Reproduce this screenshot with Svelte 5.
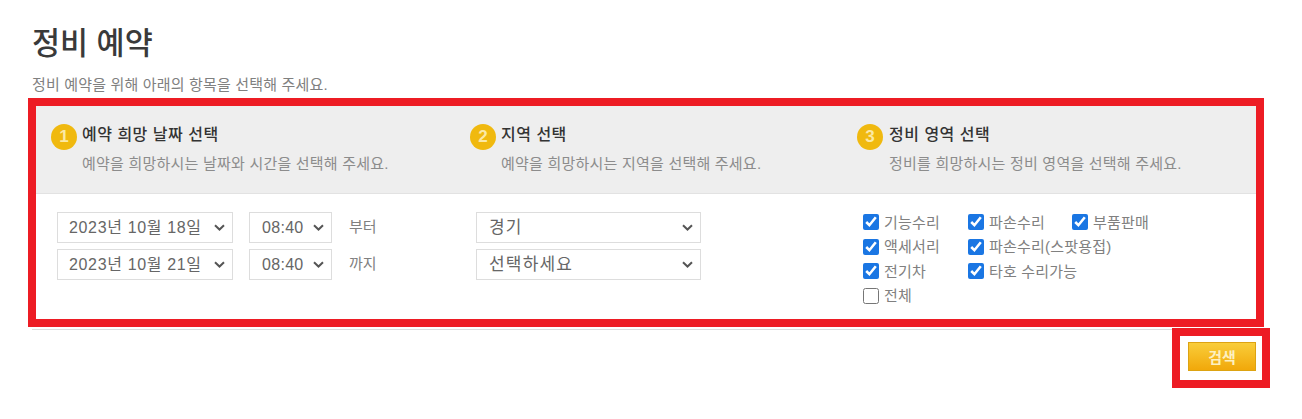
<script lang="ts">
	const steps = [
		{ no: 1, title: "예약 희망 날짜 선택", desc: "예약을 희망하시는 날짜와 시간을 선택해 주세요." },
		{ no: 2, title: "지역 선택", desc: "예약을 희망하시는 지역을 선택해 주세요." },
		{ no: 3, title: "정비 영역 선택", desc: "정비를 희망하시는 정비 영역을 선택해 주세요." }
	];

	const dates = [
		{ date: "2023년 10월 18일", time: "08:40", suffix: "부터" },
		{ date: "2023년 10월 21일", time: "08:40", suffix: "까지" }
	];

	const regions = ["경기", "선택하세요"];

	const areas = [
		{ label: "기능수리", checked: true },
		{ label: "파손수리", checked: true },
		{ label: "부품판매", checked: true },
		{ label: "액세서리", checked: true },
		{ label: "파손수리(스팟용접)", checked: true, wide: true },
		{ label: "전기차", checked: true },
		{ label: "타호 수리가능", checked: true, wide: true },
		{ label: "전체", checked: false, last: true }
	];
</script>

<main class="page">
	<h1>정비 예약</h1>
	<p class="lead">정비 예약을 위해 아래의 항목을 선택해 주세요.</p>

	<section class="panel">
		<div class="row head">
			{#each steps as step}
				<div class="step">
					<span class="badge">{step.no}</span>
					<div>
						<h2>{step.title}</h2>
						<p>{step.desc}</p>
					</div>
				</div>
			{/each}
		</div>

		<div class="row body">
			<div class="cell dates">
				{#each dates as d}
					<div class="line">
						<select class="date"><option>{d.date}</option></select>
						<select class="time"><option>{d.time}</option></select>
						<span>{d.suffix}</span>
					</div>
				{/each}
			</div>
			<div class="cell regions">
				{#each regions as r}
					<select class="region"><option>{r}</option></select>
				{/each}
			</div>
			<div class="cell areas">
				{#each areas as a}
					<label class:wide={a.wide} class:last={a.last}>
						<input type="checkbox" checked={a.checked} />
						<span>{a.label}</span>
					</label>
				{/each}
			</div>
		</div>
	</section>

	<div class="rule"></div>

	<div class="actions">
		<div class="mark">
			<button type="button">검색</button>
		</div>
	</div>
</main>

<style>
	:global(body) {
		margin: 0;
		background: #fff;
		font-family: "Liberation Sans", "Noto Sans CJK KR", sans-serif;
		color: #555;
	}

	.page {
		width: 1302px;
		height: 419px;
		box-sizing: border-box;
		padding: 26px 32px 0 28px;
		overflow: hidden;
	}

	h1 {
		margin: 0 0 0 4px;
		font-size: 30.5px;
		line-height: 34px;
		font-weight: 500;
		color: #3a3a3a;
	}

	.lead {
		margin: 15px 0 0 4px;
		font-size: 15px;
		letter-spacing: 0.17px;
		line-height: 20px;
		color: #808080;
	}

	.panel {
		margin-top: 3px;
		width: 1236px;
		height: 229px;
		box-sizing: border-box;
		border: 8px solid #ed1c24;
	}

	.row {
		display: grid;
		grid-template-columns: 420px 387px 1fr;
	}

	.head {
		height: 88px;
		box-sizing: border-box;
		background: #eee;
		border-bottom: 1px solid #e2e2e2;
	}

	.step {
		display: flex;
		gap: 5px;
		padding: 18px 0 0 14px;
	}

	.step:first-child {
		padding-left: 15px;
	}

	.step:last-child {
		gap: 6px;
	}

	.badge {
		flex: none;
		width: 26px;
		height: 26px;
		border-radius: 50%;
		background: #f0b90f;
		color: #fbe9a6;
		font-size: 17px;
		font-weight: 700;
		line-height: 26px;
		text-align: center;
	}

	.step h2 {
		margin: 0;
		font-size: 16px;
		letter-spacing: 0.5px;
		line-height: 22px;
		font-weight: 500;
		color: #333;
	}

	.step p {
		margin: 8px 0 0;
		font-size: 15px;
		letter-spacing: 0.22px;
		line-height: 20px;
		color: #8c8c8c;
	}

	.cell {
		padding-top: 18px;
	}

	.dates {
		padding-left: 21px;
	}

	.line {
		display: flex;
		align-items: center;
		margin-bottom: 6px;
		font-size: 15px;
		color: #808080;
	}

	.line span {
		margin-top: -4px;
	}

	select {
		appearance: none;
		height: 31px;
		box-sizing: border-box;
		border: 1px solid #ddd;
		border-radius: 0;
		background: #fff url("data:image/svg+xml,%3Csvg xmlns='http://www.w3.org/2000/svg' width='11' height='7' viewBox='0 0 11 7'%3E%3Cpath d='M1 1.2l4.5 4.3L10 1.2' fill='none' stroke='%23555' stroke-width='2'/%3E%3C/svg%3E") no-repeat right 7px center;
		color: #666;
		font: inherit;
		font-size: 16px;
		line-height: 26px;
		letter-spacing: 0.3px;
		padding: 0 0 0 11px;
	}

	.date {
		width: 176px;
		letter-spacing: 0.65px;
	}

	.time {
		width: 83px;
		margin: 0 17px 0 16px;
		padding-left: 12px;
	}

	.regions {
		display: flex;
		flex-direction: column;
		gap: 6px;
		padding-left: 20px;
	}

	.region {
		width: 225px;
		font-size: 17px;
		letter-spacing: 1.2px;
		padding-left: 12px;
	}

	.areas {
		display: grid;
		grid-template-columns: 105px 104px 1fr;
		grid-auto-rows: 24.5px;
		padding: 16px 0 0 20px;
		align-content: start;
	}

	label {
		display: flex;
		align-items: center;
		gap: 5px;
		font-size: 15px;
		letter-spacing: 0.2px;
		color: #808080;
	}

	label span {
		margin-top: -2px;
	}

	label.wide {
		grid-column: 2 / 4;
	}

	label.last {
		grid-column: 1 / 4;
	}

	input {
		width: 16px;
		height: 16px;
		margin: 0;
		accent-color: #1a76e3;
	}

	.rule {
		height: 1px;
		margin: 2px 0 0 4px;
		width: 1144px;
		background: #ddd;
	}

	.actions {
		display: flex;
		justify-content: flex-end;
	}

	.mark {
		margin-top: -2px;
		width: 98px;
		height: 60px;
		box-sizing: border-box;
		border: 8px solid #ed1c24;
		padding: 6px 0 0 8px;
	}

	button {
		display: block;
		width: 68px;
		height: 29px;
		border: 1px solid #dda312;
		background: linear-gradient(#f9cd3a, #f1a80a);
		color: #fdf0c0;
		font: inherit;
		font-size: 15px;
		font-weight: 700;
		padding: 0;
	}
</style>
